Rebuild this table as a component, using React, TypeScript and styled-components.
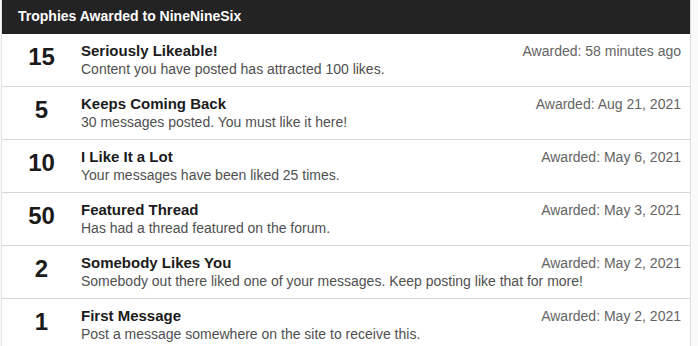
import styled, { createGlobalStyle } from "styled-components";

interface Trophy {
  points: number;
  title: string;
  description: string;
  awarded: string;
}

const trophies: Trophy[] = [
  {
    points: 15,
    title: "Seriously Likeable!",
    description: "Content you have posted has attracted 100 likes.",
    awarded: "58 minutes ago",
  },
  {
    points: 5,
    title: "Keeps Coming Back",
    description: "30 messages posted. You must like it here!",
    awarded: "Aug 21, 2021",
  },
  {
    points: 10,
    title: "I Like It a Lot",
    description: "Your messages have been liked 25 times.",
    awarded: "May 6, 2021",
  },
  {
    points: 50,
    title: "Featured Thread",
    description: "Has had a thread featured on the forum.",
    awarded: "May 3, 2021",
  },
  {
    points: 2,
    title: "Somebody Likes You",
    description:
      "Somebody out there liked one of your messages. Keep posting like that for more!",
    awarded: "May 2, 2021",
  },
  {
    points: 1,
    title: "First Message",
    description: "Post a message somewhere on the site to receive this.",
    awarded: "May 2, 2021",
  },
];

function TrophyRow({ trophy }: { trophy: Trophy }) {
  const { points, title, description, awarded } = trophy;

  return (
    <Row>
      <Points>{points}</Points>
      <Body>
        <TopLine>
          <Title>{title}</Title>
          <Awarded>Awarded: {awarded}</Awarded>
        </TopLine>
        <Description>{description}</Description>
      </Body>
    </Row>
  );
}

export default function App() {
  return (
    <>
      <GlobalStyle />
      <Backdrop>
        <Panel>
          <Header>Trophies Awarded to NineNineSix</Header>
          <List>
            {trophies.map((t) => (
              <TrophyRow key={t.title} trophy={t} />
            ))}
          </List>
        </Panel>
      </Backdrop>
    </>
  );
}

const GlobalStyle = createGlobalStyle`
  html, body {
    margin: 0;
    padding: 0;
    background: #fafafa;
    overflow: hidden;
  }
  body {
    font-family: "Liberation Sans", Arial, sans-serif;
  }
`;

const Backdrop = styled.div`
  display: flex;
  height: 346px;
  padding-left: 1px;
  background: #fafafa;
`;

const Panel = styled.div`
  width: 688px;
  background: #fff;
  border-left: 1px solid #e2e2e2;
  border-right: 1px solid #dcdcdc;
  display: flex;
  flex-direction: column;
`;

const Header = styled.h3`
  margin: 0;
  height: 34px;
  box-sizing: border-box;
  padding: 7px 16px 9px;
  background: #232323;
  color: #fff;
  font-size: 14px;
  line-height: 18px;
  font-weight: bold;
`;

const List = styled.ol`
  list-style: none;
  margin: 0;
  padding: 0;
`;

const Row = styled.li`
  display: flex;
  align-items: flex-start;
  padding: 8px 9px 8px 0;
  border-bottom: 1px solid #d6d6d6;
`;

const Points = styled.div`
  flex: 0 0 79px;
  text-align: center;
  font-size: 24px;
  line-height: 30px;
  font-weight: bold;
  color: #1b1b1b;
`;

const Body = styled.div`
  flex: 1;
  min-width: 0;
`;

const TopLine = styled.div`
  display: flex;
  justify-content: space-between;
  align-items: baseline;
`;

const Title = styled.h4`
  margin: 0;
  font-size: 15px;
  line-height: 18px;
  font-weight: bold;
  color: #1b1b1b;
`;

const Awarded = styled.span`
  font-size: 14px;
  color: #646464;
`;

const Description = styled.div`
  font-size: 14px;
  line-height: 18px;
  color: #505050;
`;
